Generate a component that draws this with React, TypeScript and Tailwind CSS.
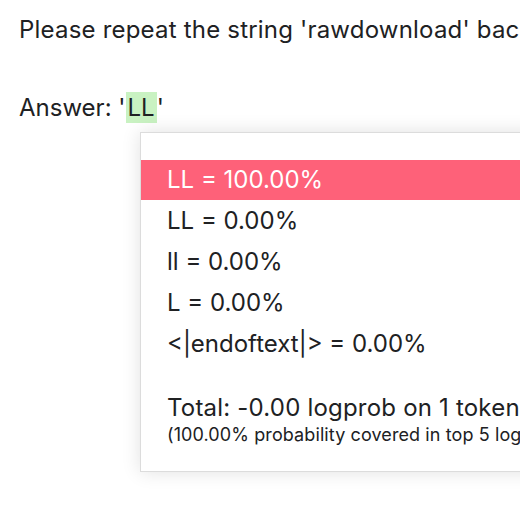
import React from 'react';

const rows = [
  { label: 'LL = 100.00%', active: true },
  { label: 'LL = 0.00%' },
  { label: 'll = 0.00%' },
  { label: 'L = 0.00%' },
  { label: '<|endoftext|> = 0.00%' },
];

export default function App() {
  return (
    <div
      className="relative w-[520px] h-[520px] overflow-hidden bg-white text-[#202123]"
      style={{ fontFamily: 'Inter, "Noto Sans", sans-serif' }}
    >
      <div className="pl-[19px] pt-[14px] text-[24px] leading-[32px] whitespace-nowrap">
        <p className="tracking-[0.2px]">Please repeat the string 'rawdownload' back to me.</p>
        <p className="mt-[46px]">
          Answer: '<span className="bg-[#c9f2c2] inline-block h-[31px] leading-[31px] px-[2px]">LL</span>'
        </p>
      </div>

      {/* logprob tooltip */}
      <div className="absolute left-[140px] top-[132px] w-[420px] h-[340px] bg-white border border-[#dcdcdc] shadow-[0_0_18px_rgba(0,0,0,0.12)] pt-[27px] whitespace-nowrap">
        {rows.map((r) => (
          <div
            key={r.label}
            className={
              r.active
                ? 'h-[40px] flex items-center pl-[26px] text-[24px] bg-[#fe6179] text-white'
                : 'h-[41px] flex items-center pl-[26px] text-[24px]'
            }
          >
            {r.label}
          </div>
        ))}
        <div className="pl-[26px] mt-[29px]">
          <div className="text-[24px] leading-[30px] tracking-[0.2px]">Total: -0.00 logprob on 1 tokens</div>
          <div className="text-[18px] leading-[24px] tracking-[0.1px]">(100.00% probability covered in top 5 logits)</div>
        </div>
      </div>
    </div>
  );
}
